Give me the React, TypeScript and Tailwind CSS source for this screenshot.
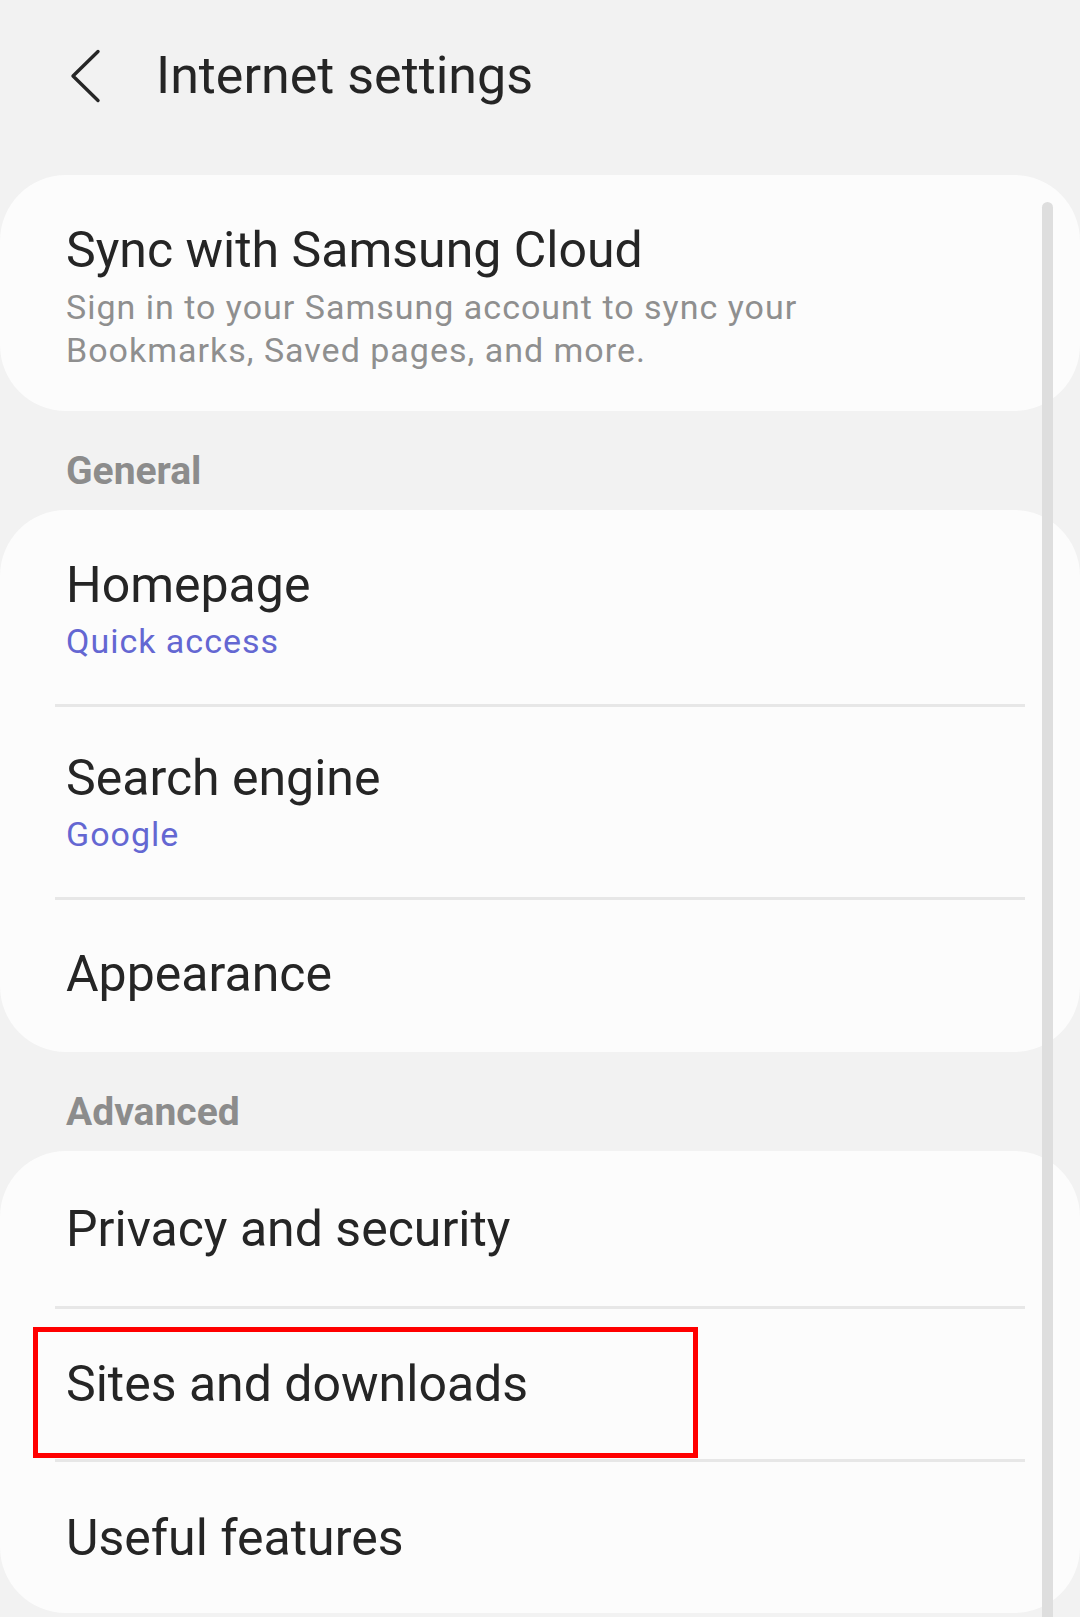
import React from "react";

const font = { fontFamily: "Roboto, 'Noto Sans', sans-serif" };

function Divider() {
  return <div className="mx-[55px] h-[3px] bg-[#e7e7e7]" />;
}

function TwoLineRow({ title, sub, pt }: { title: string; sub: string; pt: string }) {
  return (
    <div className={`pl-[66px] pr-[60px] ${pt} pb-[41px]`}>
      <div className="text-[50px] leading-[50px] text-[#252525] whitespace-nowrap">{title}</div>
      <div className="mt-[10px] text-[34px] leading-[43px] tracking-[1px] text-[#6467d2] whitespace-nowrap">{sub}</div>
    </div>
  );
}

function OneLineRow({ title, h, children }: { title: string; h: string; children?: React.ReactNode }) {
  return (
    <div className={`relative flex items-center pl-[66px] pr-[60px] ${h}`}>
      <div className="text-[50px] leading-[50px] text-[#252525] whitespace-nowrap">{title}</div>
      {children}
    </div>
  );
}

function SectionHeader({ label }: { label: string }) {
  return (
    <div className="pl-[66px] pt-[41px] pb-[20px]">
      <div className="text-[39px] leading-[38px] font-bold text-[#8c8c8c]">{label}</div>
    </div>
  );
}

export default function App() {
  return (
    <div className="relative w-[1080px] h-[1617px] overflow-hidden bg-[#f2f2f2]" style={font}>
      {/* Header */}
      <div className="h-[175px]">
        <div className="flex h-[152px] items-center">
          <svg className="ml-[70px]" width="31" height="54" viewBox="0 0 31 54">
            <polyline
              points="28,2.5 3,27 28,51.5"
              fill="none"
              stroke="#262626"
              strokeWidth="3.4"
              strokeLinecap="round"
              strokeLinejoin="round"
            />
          </svg>
          <div className="ml-[55px] text-[52px] leading-[50px] text-[#252525]">Internet settings</div>
        </div>
      </div>

      {/* Sync card */}
      <div className="rounded-[66px] bg-[#fcfcfc] pl-[66px] pt-[50px] pb-[38px] h-[236px]">
        <div className="text-[50px] leading-[50px] text-[#252525] whitespace-nowrap">Sync with Samsung Cloud</div>
        <div className="mt-[11px] text-[34px] leading-[43px] tracking-[1px] text-[#8f8f8f] whitespace-nowrap">
          Sign in to your Samsung account to sync your
          <br />
          Bookmarks, Saved pages, and more.
        </div>
      </div>

      <SectionHeader label="General" />

      <div className="rounded-[66px] bg-[#fcfcfc] h-[542px]">
        <TwoLineRow title="Homepage" sub="Quick access" pt="pt-[50px]" />
        <Divider />
        <TwoLineRow title="Search engine" sub="Google" pt="pt-[46px]" />
        <Divider />
        <OneLineRow title="Appearance" h="h-[148px]" />
      </div>

      <SectionHeader label="Advanced" />

      <div className="rounded-[66px] bg-[#fcfcfc] h-[462px]">
        <OneLineRow title="Privacy and security" h="h-[155px]" />
        <Divider />
        <OneLineRow title="Sites and downloads" h="h-[150px]">
          <div className="absolute left-[33px] top-[18px] w-[665px] h-[131px] border-[5px] border-[#ff0000]" />
        </OneLineRow>
        <Divider />
        <OneLineRow title="Useful features" h="h-[151px]" />
      </div>

      {/* Scrollbar */}
      <div className="absolute left-[1042px] top-[202px] w-[11px] h-[1430px] rounded-full bg-[#dedede]" />
    </div>
  );
}
